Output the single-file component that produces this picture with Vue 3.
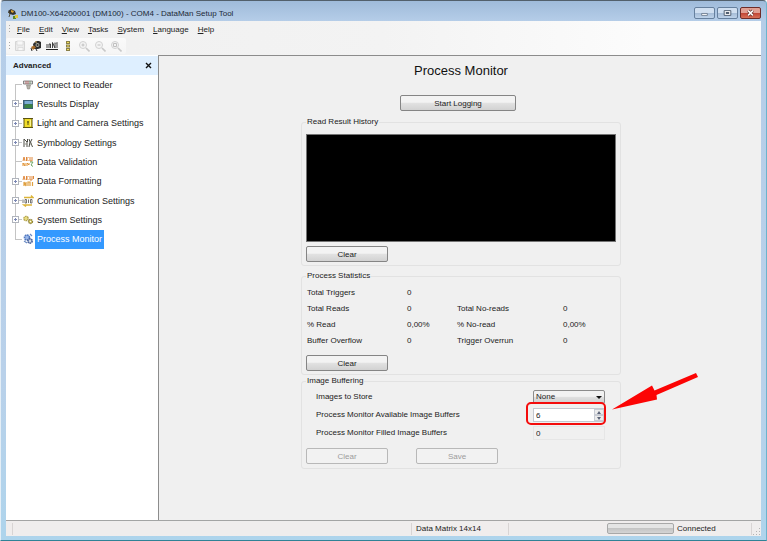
<script setup>
import { ref } from 'vue'

const menus = ['File', 'Edit', 'View', 'Tasks', 'System', 'Language', 'Help']

const tools = [
  { icon: 'save', label: 'Save', off: true },
  { icon: 'camera', label: 'Camera', off: false },
  { icon: 'train', label: 'Train', off: false },
  { icon: 'light', label: 'Lighting', off: false },
  { icon: 'zoomin', label: 'Zoom in', off: true },
  { icon: 'zoomout', label: 'Zoom out', off: true },
  { icon: 'zoomfit', label: 'Zoom to fit', off: true },
]

const nodes = [
  { label: 'Connect to Reader', icon: 'reader', open: false },
  { label: 'Results Display', icon: 'display', open: true },
  { label: 'Light and Camera Settings', icon: 'lamp', open: true },
  { label: 'Symbology Settings', icon: 'symbol', open: true },
  { label: 'Data Validation', icon: 'valid', open: false },
  { label: 'Data Formatting', icon: 'format', open: true },
  { label: 'Communication Settings', icon: 'comm', open: true },
  { label: 'System Settings', icon: 'gears', open: true },
  { label: 'Process Monitor', icon: 'monitor', open: false },
]
const selected = ref('Process Monitor')

const stats = [
  ['Total Triggers', '0', '', ''],
  ['Total Reads', '0', 'Total No-reads', '0'],
  ['% Read', '0,00%', '% No-read', '0,00%'],
  ['Buffer Overflow', '0', 'Trigger Overrun', '0'],
]

const store = ref('None')
const buffers = ref('6')
function step(n) {
  buffers.value = String(Math.max(0, (parseInt(buffers.value) || 0) + n))
}
</script>

<template>
  <div class="window">
    <svg class="defs" aria-hidden="true">
      <symbol id="i-save" viewBox="0 0 12 12"><path d="M1.500 1.500h9v9h-9z" fill="#ececec" stroke="#d6d6d6" /><path d="M3 1h6v4H3zM4 7.500h5v3H4z" fill="#f8f8f8" stroke="#d4d4d4" stroke-width=".6" /></symbol>
      <symbol id="i-camera" viewBox="0 0 12 12"><path d="M3 4l2-2 1-1h3l2 1v6l-3 1H4z" fill="#2c2c2c" /><circle cx="7.500" cy="5" r="2" fill="#a8a89c" /><circle cx="7.500" cy="5" r="1" fill="#2c2c2c" /><path d="M1 7l3-1.500 2 2L3 10z" fill="#a86c28" /><path d="M1 8l1 3M6 9l1 2" stroke="#2c2c2c" /><path d="M5 2h2" stroke="#d8b060" /></symbol>
      <symbol id="i-train" viewBox="0 0 12 12"><path d="M1 4v4M3 8V4h1.500v4M6.500 8V2.500L9 8V2.500M11 8V2.500L10 3.500" stroke="#2c2c2c" fill="none" stroke-width=".9" /><path d="M0 9.500h12" stroke="#222" /></symbol>
      <symbol id="i-light" viewBox="0 0 12 12"><path d="M4 1h4v3H4zM4 4.500h4v3H4zM4 8h4v3H4z" fill="#8a8048" /><path d="M5 2h2v1H5zM5 5.500h2v1H5zM5 9h2v1H5z" fill="#f0dc58" /></symbol>
      <symbol id="i-zoomin" viewBox="0 0 12 12"><circle cx="5" cy="5" r="3.500" fill="#f4f4f4" stroke="#d2d2d2" /><path d="M8 8l3.500 3.500" stroke="#c8c8c8" stroke-width="1.600" /><path d="M3.500 5h3M5 3.500v3" stroke="#c0c0c0" /></symbol>
      <symbol id="i-zoomout" viewBox="0 0 12 12"><circle cx="5" cy="5" r="3.500" fill="#f4f4f4" stroke="#d2d2d2" /><path d="M8 8l3.500 3.500" stroke="#c8c8c8" stroke-width="1.600" /><path d="M3.500 5h3" stroke="#c0c0c0" /></symbol>
      <symbol id="i-zoomfit" viewBox="0 0 12 12"><circle cx="5" cy="5" r="3.500" fill="#f4f4f4" stroke="#d2d2d2" /><path d="M8 8l3.500 3.500" stroke="#c8c8c8" stroke-width="1.600" /><path d="M3.500 3.500h3v3h-3z" fill="none" stroke="#c0c0c0" /></symbol>
      <symbol id="i-app" viewBox="0 0 12 12"><path d="M1 3l3-2 4 2 1 3-3 1-3-1z" fill="#34322c" /><path d="M4 2l3 1-1 2-2-1z" fill="#d8a030" /><path d="M1 4l2 2-1 3" stroke="#54503c" fill="none" /><path d="M6 8h3v3H6z" fill="#5c8a28" /><path d="M8 7h3v3H8z" fill="#e0c840" /></symbol>
      <symbol id="i-reader" viewBox="0 0 12 12"><path d="M1.500 2h9v3h-9z" fill="#dcdcdc" stroke="#6c6c6c" stroke-width=".8" /><path d="M4 2v3M6 2v3" stroke="#b85858" stroke-width=".8" /><path d="M8 2v3" stroke="#6c9c6c" stroke-width=".8" /><path d="M4.500 6h4l-1 4h-2z" fill="#b8b4ac" stroke="#848078" stroke-width=".6" /></symbol>
      <symbol id="i-display" viewBox="0 0 12 12"><path d="M1 2h10v9H1z" fill="#3c6078" /><path d="M2.500 3h8v3h-8z" fill="#7cacd4" /><path d="M2.500 7l3-1 5 .5V10h-8z" fill="#3c8444" /></symbol>
      <symbol id="i-lamp" viewBox="0 0 12 12"><path d="M2 1.500h8v9H2z" fill="#f0dc28" stroke="#5c5410" /><path d="M1 1.500h10M1 10.500h10" stroke="#5c5410" stroke-width="1.200" /><path d="M6 4v4M5 5h2" stroke="#5c5410" /><path d="M8 3h1v6H8z" fill="#fcf490" /></symbol>
      <symbol id="i-symbol" viewBox="0 0 12 12"><path d="M2 2v8M2 2l3 3v5M5.500 2v3M7 2l1 3-1 5M10 2l-1.500 3 2 5" stroke="#4c4c44" fill="none" /><path d="M3 7h2M8 7h2" stroke="#8c8c80" /></symbol>
      <symbol id="i-valid" viewBox="0 0 12 12"><path d="M1 5l1-4 1 4M4.500 1v4M4.500 3L6.500 1M4.500 3l2 2M8 1v4h2V1" stroke="#e0883c" fill="none" /><path d="M1 10V7l2 3V7M5 10V7l2 2V7" stroke="#e09030" fill="none" /><path d="M8 6h3l-2 3 2 1.500" stroke="#70a868" fill="none" /></symbol>
      <symbol id="i-format" viewBox="0 0 12 12"><path d="M1 5l1-4 1 4M4.500 1v4M4.500 3L6.500 1M4.500 3l2 2M8 1v4h2V1M11.500 1v3" stroke="#e0883c" fill="none" /><path d="M2 11V7l2 4V7M6 11V7h2v4M10.500 7v4" stroke="#e0a040" stroke-width="1.200" fill="none" /></symbol>
      <symbol id="i-comm" viewBox="0 0 12 12"><path d="M2 2.500h9L9 .5M10 10H2l2 1.500" stroke="#dcb438" stroke-width="1.400" fill="none" /><path d="M1 4.500v3.500M3 4.500h1.500V8H3zM6.500 4.500V8M8.500 4.500H10V8H8.500z" stroke="#555" stroke-width=".8" fill="none" /></symbol>
      <symbol id="i-gears" viewBox="0 0 12 12"><circle cx="4" cy="4.500" r="2.200" fill="#e8dc80" stroke="#b0a048" stroke-width="1.300" stroke-dasharray="1.500 .6" /><circle cx="8.500" cy="7.500" r="2" fill="#d8c858" stroke="#8c8040" stroke-width="1.300" stroke-dasharray="1.300 .5" /><circle cx="8.500" cy="7.500" r=".7" fill="#fff" /></symbol>
      <symbol id="i-monitor" viewBox="0 0 12 12"><circle cx="5" cy="4.500" r="2.500" fill="#9cb8e8" stroke="#5078c0" stroke-width="1.600" stroke-dasharray="1.700 .6" /><circle cx="8" cy="8" r="2.200" fill="#a8b8d0" stroke="#48609c" stroke-width="1.500" stroke-dasharray="1.500 .6" /><path d="M8 1l2 2M2 8l3 2" stroke="#6c8cc4" stroke-width="1.200" /><circle cx="8" cy="8" r=".8" fill="#fff" /></symbol>
    </svg>

    <header class="titlebar">
      <svg class="icon"><use href="#i-app" /></svg>
      <span class="caption">DM100-X64200001 (DM100) - COM4 - DataMan Setup Tool</span>
      <div class="controls">
        <button class="ctl" aria-label="Minimize"><svg viewBox="0 0 20 10"><path d="M7 5.500h6v2H7z" fill="#fff" stroke="#5c6c80" stroke-width=".8" /></svg></button>
        <button class="ctl" aria-label="Maximize"><svg viewBox="0 0 20 10"><path d="M6.500 2.500h7v5h-7z" fill="#fff" stroke="#4c5c70" /><path d="M8.500 4.500h3v1h-3z" stroke="#4c5c70" /></svg></button>
        <button class="ctl close" aria-label="Close"><svg viewBox="0 0 20 10"><path d="M7.500 2.500l5 5M12.500 2.500l-5 5" stroke="#5c2824" stroke-width="3" /><path d="M7.500 2.500l5 5M12.500 2.500l-5 5" stroke="#fff" stroke-width="1.600" /></svg></button>
      </div>
    </header>

    <div class="client">
      <div class="bars">
        <nav class="menubar">
          <i class="grip"></i>
          <button v-for="m in menus" :key="m" class="menu"><u>{{ m[0] }}</u>{{ m.slice(1) }}</button>
        </nav>
        <div class="toolbar">
          <i class="grip"></i>
          <button v-for="t in tools" :key="t.icon" class="tool" :disabled="t.off" :aria-label="t.label">
            <svg class="icon"><use :href="'#i-' + t.icon" /></svg>
          </button>
        </div>
      </div>

      <div class="work">
        <aside class="side">
          <div class="side-head">
            <b>Advanced</b>
            <button class="side-close" aria-label="Close panel"><svg viewBox="0 0 7 7"><path d="M1 1l5 5M6 1L1 6" stroke="#111" stroke-width="1.400" /></svg></button>
          </div>
          <ul class="tree">
            <li v-for="n in nodes" :key="n.label" class="node">
              <span class="branch"><button v-if="n.open" class="expander" :aria-label="'Expand ' + n.label"></button></span>
              <svg class="icon"><use :href="'#i-' + n.icon" /></svg>
              <button class="label" :class="{ on: selected === n.label }" @click="selected = n.label">{{ n.label }}</button>
            </li>
          </ul>
        </aside>

        <main class="main">
          <h1>Process Monitor</h1>
          <button class="btn start">Start Logging</button>

          <fieldset class="group">
            <legend>Read Result History</legend>
            <div class="history"></div>
            <button class="btn">Clear</button>
          </fieldset>

          <fieldset class="group tight">
            <legend>Process Statistics</legend>
            <table class="stats">
              <tbody>
                <tr v-for="r in stats" :key="r[0]">
                  <td v-for="(c, i) in r" :key="i">{{ c }}</td>
                </tr>
              </tbody>
            </table>
            <button class="btn">Clear</button>
          </fieldset>

          <fieldset class="group">
            <legend>Image Buffering</legend>
            <div class="rows">
              <div class="row">
                <label for="store">Images to Store</label>
                <div class="field">
                  <select id="store" v-model="store">
                    <option>None</option>
                    <option>All</option>
                  </select>
                  <svg class="caret" viewBox="0 0 6 3"><path d="M0 0h6L3 3z" fill="#111" /></svg>
                </div>
              </div>
              <div class="row">
                <label for="avail">Process Monitor Available Image Buffers</label>
                <div class="field">
                  <input id="avail" v-model="buffers" type="text" />
                  <div class="spin">
                    <button aria-label="Increase" @click="step(1)"><svg viewBox="0 0 6 3"><path d="M1 3h4L3 0z" fill="#5c6478" /></svg></button>
                    <button aria-label="Decrease" @click="step(-1)"><svg viewBox="0 0 6 3"><path d="M1 0h4L3 3z" fill="#5c6478" /></svg></button>
                  </div>
                  <svg class="callout" viewBox="0 0 176 56" aria-hidden="true">
                    <rect x="2" y="31" width="78" height="21" rx="4" fill="none" stroke="#f40c0c" stroke-width="2" />
                    <path d="M87 37.500L127 13.500L129.500 18.500L171 1L173 5L131.500 23L132 27.500z" fill="#fc0404" />
                  </svg>
                </div>
              </div>
              <div class="row">
                <label for="filled">Process Monitor Filled Image Buffers</label>
                <div class="field"><input id="filled" class="ro" type="text" value="0" readonly /></div>
              </div>
            </div>
            <div class="pair">
              <button class="btn" disabled>Clear</button>
              <button class="btn" disabled>Save</button>
            </div>
          </fieldset>
        </main>
      </div>

      <footer class="status">
        <span class="cell nub"></span>
        <span class="cell wide"></span>
        <span class="cell code">Data Matrix 14x14</span>
        <span class="cell mid"></span>
        <span class="meter"></span>
        <span class="cell conn">Connected</span>
        <svg class="sizer" viewBox="0 0 9 9"><path d="M7 1h1v1H7zM4 4h1v1H4zM7 4h1v1H7zM1 7h1v1H1zM4 7h1v1H4zM7 7h1v1H7z" fill="#b4b4b4" /></svg>
      </footer>
    </div>
  </div>
</template>

<style>
body { margin: 0; }
</style>

<style scoped>
* { box-sizing: border-box; }
.window {
  display: flex;
  flex-direction: column;
  min-height: 100vh;
  padding: 0 5px 4px;
  border: 1px solid #52606c;
  border-bottom-color: #2f8296;
  border-left-color: #e4eef6;
  border-right-color: #6cb4cc;
  border-radius: 4px 4px 0 0;
  background: linear-gradient(#9fbbda, #b5cde8 20px, #b9d1ea 70%, #aed4ec);
  font-family: "Liberation Sans", Arial, sans-serif;
  font-size: 8px;
  line-height: 10px;
  color: #222;
}
.defs { position: absolute; width: 0; height: 0; }
button, input, select { font: inherit; color: inherit; margin: 0; padding: 0; border: 0; background: none; }
svg { display: block; }
.icon { width: 12px; height: 12px; flex: none; }

.titlebar { display: flex; align-items: center; height: 20px; padding-top: 5px; }
.titlebar .icon { margin-left: 1px; }
.caption { flex: 1; padding-left: 2px; color: #1c2836; white-space: nowrap; }
.controls { display: flex; gap: 2px; align-self: flex-end; margin-bottom: 2px; }
.ctl { width: 21px; height: 12px; border: 1px solid #66809e; border-radius: 2px; background: linear-gradient(#d0dff0 45%, #a5bcd6 50%, #bdd2ea); }
.ctl svg { width: 19px; height: 10px; }
.close { border-color: #6e2c28; background: linear-gradient(#e0a094 45%, #c04434 50%, #d87058); }

.client { display: flex; flex-direction: column; flex: 1; background: #f0f0f0; }
.bars { padding-bottom: 1px; background: linear-gradient(90deg, #f0f0f0, #f3f3f3 50%, #fcfcfc 85%); }
.menubar { display: flex; align-items: center; gap: 9px; height: 17px; padding-left: 3px; }
.grip { width: 1px; height: 9px; background: repeating-linear-gradient(#a8a8a8 0 1px, transparent 1px 3px); }
.menubar .grip { margin-right: -2px; }
.toolbar { display: flex; align-items: center; gap: 4px; width: 120px; height: 16px; padding-left: 3px; border-radius: 2px; background: linear-gradient(#fafafa, #f5f5f5); }

.work { display: flex; flex: 1; }
.side { width: 153px; flex: none; border-right: 1px solid #8c8c8c; background: #fff; }
.side-head { display: flex; align-items: center; justify-content: space-between; height: 19px; margin-top: 1px; padding: 0 6px 0 7px; background: #deefff; }
.side-close svg { width: 7px; height: 7px; }
.tree { margin: 0; padding: 0 0 0 6px; list-style: none; font-size: 9px; }
.node { display: flex; align-items: center; height: 19px; }
.node:nth-child(3n) { height: 20px; }
.branch {
  display: flex;
  align-items: center;
  align-self: stretch;
  width: 10px;
  background: linear-gradient(#c4c4c4, #c4c4c4) 3px 0 / 1px 100% no-repeat, linear-gradient(#c4c4c4, #c4c4c4) 3px 50% / 7px 1px no-repeat;
}
.node:first-child .branch { background-position: 3px 10px, 3px 50%; }
.node:last-child .branch { background-size: 1px 50%, 7px 1px; }
.expander {
  width: 7px;
  height: 7px;
  border: 1px solid #b0b4bc;
  background: linear-gradient(#7c88b4, #7c88b4) 1px 2px / 3px 1px no-repeat, linear-gradient(#7c88b4, #7c88b4) 2px 1px / 1px 3px no-repeat, #fff;
}
.label { height: 19px; padding: 0 2px; margin-left: 1px; white-space: nowrap; }
.label.on { background: #3399ff; color: #fff; }

.main { display: flex; flex: 1; flex-direction: column; align-items: center; padding: 6px 0 16px 2px; border-top: 1px solid #8c8c8c; }
h1 { margin: 0 0 15px; font-weight: 400; font-size: 13px; line-height: 18px; color: #111; }
.btn { display: block; width: 82px; height: 16px; border: 1px solid #858585; border-radius: 2px; background: linear-gradient(#f3f3f3 45%, #e2e2e2 50%, #d2d2d2); line-height: 13px; }
.btn:disabled { border-color: #b8b8b8; background: #f2f2f2; color: #9c9c9c; }
.start { width: 116px; margin: 0 6px 6px 0; }
.group { width: 320px; margin: 0 0 5px; padding: 0 4px 3px; border: 1px solid #e2e2e2; border-radius: 3px; }
.group.tight { margin-bottom: 1px; }
legend { height: 10px; padding: 0 1px; line-height: 10px; }
.history { height: 108px; margin: 7px 0 4px; border: 1px solid #747474; background: #000; }
.stats { width: 100%; margin: 4px 0 6px; border-collapse: collapse; table-layout: fixed; }
.stats td { height: 16px; padding: 0 1px; }
.stats td:nth-child(1) { width: 100px; }
.stats td:nth-child(2) { width: 50px; }
.stats td:nth-child(3) { width: 106px; }
.rows { padding-top: 2px; }
.row { display: flex; align-items: center; justify-content: space-between; height: 18px; padding: 0 11px 0 10px; }
.field { position: relative; display: flex; width: 72px; height: 14px; }
select, input { width: 100%; height: 14px; padding: 0 2px; border: 1px solid #8c8c8c; outline: 0; }
select { appearance: none; border-radius: 2px; background: linear-gradient(#f2f2f2 45%, #e0e0e0 50%, #d0d0d0); }
input { border-color: #c4c8d0; background: #fff; }
.ro { border-color: #e6e6e6; background: #f0f0f0; }
.caret { position: absolute; right: 3px; top: 6px; width: 6px; height: 3px; pointer-events: none; }
.spin { position: absolute; right: 1px; top: 1px; display: grid; width: 10px; height: 12px; }
.spin button { display: grid; place-items: center; border: 1px solid #c8ccd4; background: #ececec; }
.spin svg { width: 6px; height: 3px; }
.callout { position: absolute; left: -8px; top: -36px; width: 176px; height: 56px; pointer-events: none; }
.pair { display: flex; gap: 28px; padding: 6px 0 1px; }

.status { display: flex; align-items: center; height: 16px; border-top: 1px solid #a4a4a4; background: #f0eded; }
.cell { height: 12px; line-height: 12px; border-right: 1px solid #d8d4d4; white-space: nowrap; }
.nub { width: 7px; }
.wide { flex: 1; }
.code { width: 97px; padding-left: 4px; }
.mid { width: 98px; border: 0; }
.meter { width: 67px; height: 11px; border: 1px solid #a8a8a8; border-radius: 2px; background: linear-gradient(#e4e4e4 40%, #c4c4c4 50%, #d4d4d4); }
.conn { width: 78px; padding-left: 3px; }
.sizer { width: 9px; height: 9px; align-self: flex-end; }
</style>
